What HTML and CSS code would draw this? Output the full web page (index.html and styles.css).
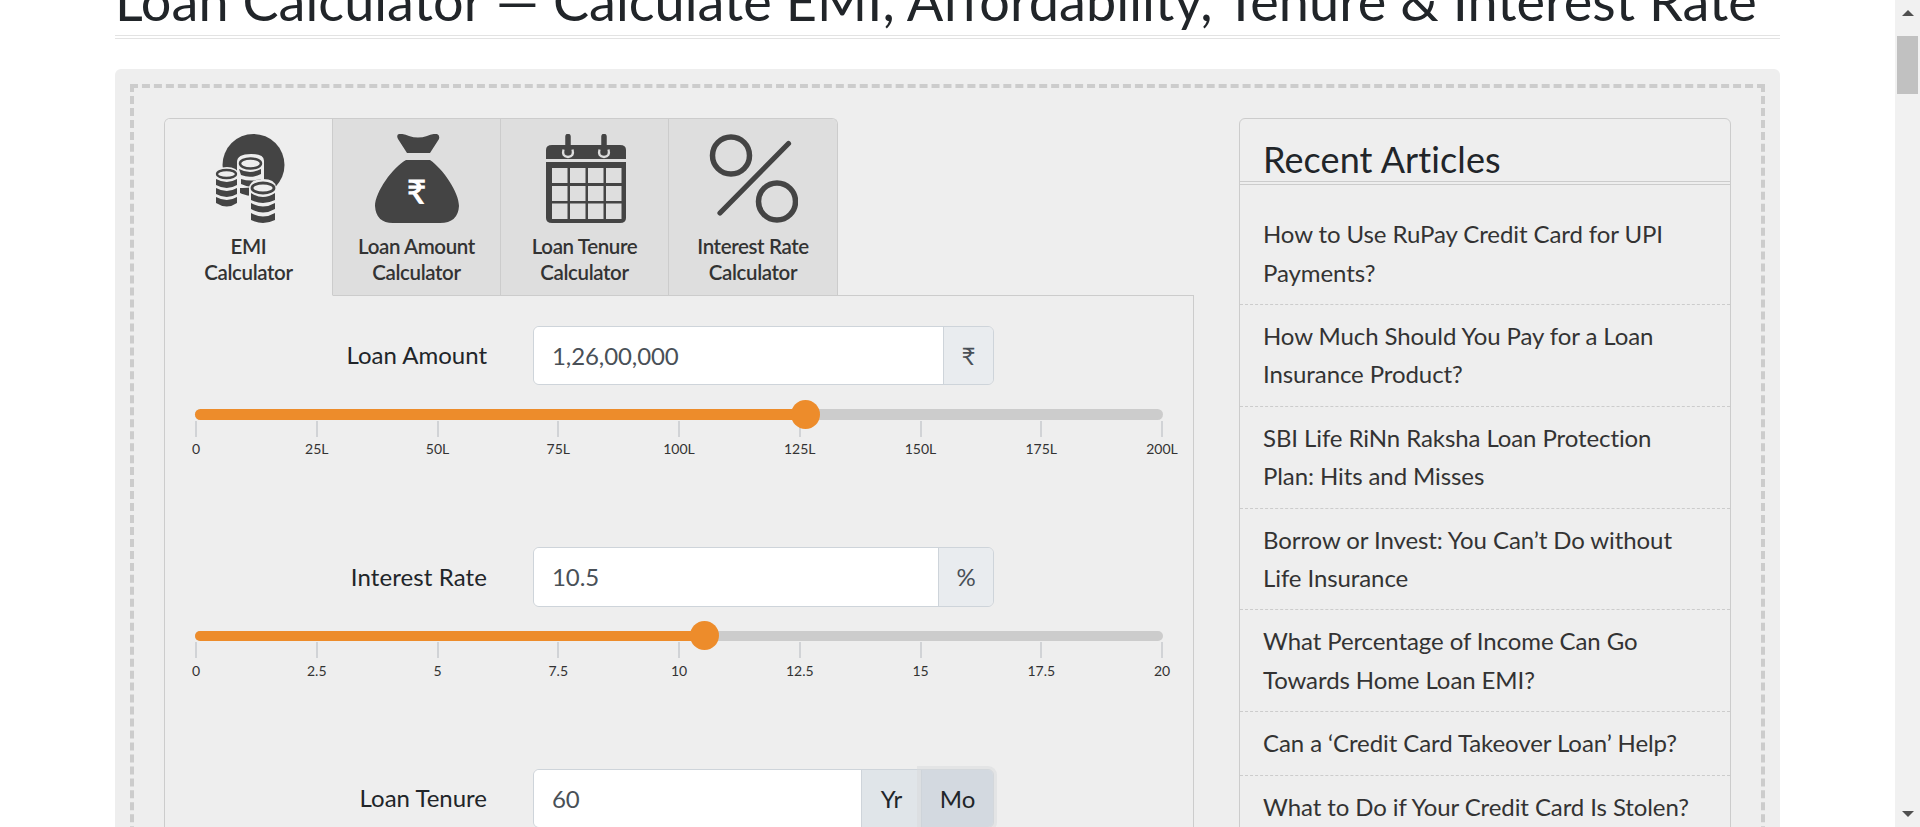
FILE: index.html
```html
<!DOCTYPE html>
<html lang="en">
<head>
<meta charset="utf-8">
<title>Loan Calculator</title>
<link rel="stylesheet" href="styles.css">
</head>
<body>
<div class="viewport">
  <main class="page">
    <h1 class="title"><span>Loan Calculator — Calculate EMI, Affordability, Tenure &amp; Interest Rate</span></h1>
    <div class="card">
      <div class="frame">
        <section class="calculator">
          <nav class="tabs">
            <a class="tab active">
              <svg class="tab-icon" viewBox="0 0 90 90">
                <circle cx="49.500" cy="31" r="31" fill="#444"/>
                <g transform="translate(9 0)">
                  <path d="M24 28Q24 20 38 20T51 28V50Q46 54 24 54z" fill="#eee"/>
                  <path d="M28 45Q38 48 48 45V52Q38 55 28 50z" fill="#444"/>
                  <path d="M26 35Q37 41 48 35V40Q38 45 28 41z" fill="#444"/>
                  <ellipse cx="37.500" cy="29.500" rx="10.500" ry="5" fill="#eee" stroke="#444" stroke-width="2.500"/>
                  <path d="M0 40Q4 33 14 33T27 41V72H3z" fill="#eee"/>
                  <path d="M3 45Q14 51 24 45V51Q14 57 3 51zM3 54Q14 60 24 54V60Q14 66 3 60zM3 63Q14 69 24 63V69Q14 76 3 69z" fill="#444"/>
                  <ellipse cx="13.500" cy="40" rx="9.500" ry="4" fill="#eee" stroke="#444" stroke-width="2.300"/>
                  <path d="M36 53Q38 45 50 45T63 53V90H36z" fill="#eee"/>
                  <path d="M38 59Q50 67 62 59V66Q50 72 38 66zM38 69Q50 76 62 69V75Q50 82 38 75zM38 79Q50 86 62 79V86Q50 92 38 86z" fill="#444"/>
                  <ellipse cx="50" cy="54" rx="11" ry="5" fill="#eee" stroke="#444" stroke-width="2.800"/>
                </g>
              </svg>
              <span>EMI<br>Calculator</span>
            </a>
            <a class="tab">
              <span class="bag">
                <svg class="tab-icon" viewBox="-1 0 90 90">
                  <path d="M26 0Q31-.5 36 2Q45 5 54 2Q59-.5 64 0Q67 1 66 5L57 19H34L25 5Q23 1 26 0zM33 26H57C70 35 86 58 86 72Q85 89 67 89H20Q3 89 2 72C2 58 20 33 33 26z" fill="#444"/>
                </svg>
                <b class="bag-sign">₹</b>
              </span>
              <span>Loan Amount<br>Calculator</span>
            </a>
            <a class="tab">
              <svg class="tab-icon" viewBox="-1 0 90 90">
                <path d="M5 25V16Q5 11 11 11H79Q85 11 85 16V25z" fill="#444"/>
                <path d="M5 28H85V84Q85 89 79 89H11Q5 89 5 84z" fill="#444"/>
                <path d="M11 34h15.500v15H11zM29 34h15.500v15H29zM47 34h15.500v15H47zM65 34h15.500v15H65zM11 52h15.500v15H11zM29 52h15.500v15H29zM47 52h15.500v15H47zM65 52h15.500v15H65zM11 69.500h15.500V85H11zM29 69.500h15.500V85H29zM47 69.500h15.500V85H47zM65 69.500h15.500V85H65z" fill="#dedede"/>
                <path d="M22.500 15.500q-2 7 4.500 7.500q6.500-.5 4.500-7.500M58.500 15.500q-2 7 4.500 7.500q6.500-.5 4.500-7.500" fill="none" stroke="#dedede" stroke-width="2.300"/>
                <path d="M27 2.500V17.500M63 2.500V17.500" stroke="#444" stroke-width="5.500" stroke-linecap="round"/>
              </svg>
              <span>Loan Tenure<br>Calculator</span>
            </a>
            <a class="tab">
              <svg class="tab-icon" viewBox="-1 0 90 90">
                <g fill="none" stroke="#444">
                  <circle cx="22" cy="21.500" r="18.500" stroke-width="5.500"/>
                  <circle cx="68" cy="67.500" r="18.500" stroke-width="5.500"/>
                  <path d="M11 79L79.500 9.500" stroke-width="5.200" stroke-linecap="round"/>
                </g>
              </svg>
              <span>Interest Rate<br>Calculator</span>
            </a>
          </nav>
          <div class="panel">
            <div class="row">
              <div class="field">
                <label class="label">Loan Amount</label>
                <div class="group"><span class="value">1,26,00,000</span><span class="addon rupee">₹</span></div>
              </div>
              <div class="slider"><div class="fill" style="width:63%"></div><i class="knob" style="left:63%"></i></div>
              <div class="scale"><span>0</span><span>25L</span><span>50L</span><span>75L</span><span>100L</span><span>125L</span><span>150L</span><span>175L</span><span>200L</span></div>
            </div>
            <div class="row rate">
              <div class="field">
                <label class="label">Interest Rate</label>
                <div class="group"><span class="value">10.5</span><span class="addon percent">%</span></div>
              </div>
              <div class="slider"><div class="fill" style="width:52.5%"></div><i class="knob" style="left:52.5%"></i></div>
              <div class="scale"><span>0</span><span>2.5</span><span>5</span><span>7.5</span><span>10</span><span>12.5</span><span>15</span><span>17.5</span><span>20</span></div>
            </div>
            <div class="row">
              <div class="field">
                <label class="label">Loan Tenure</label>
                <div class="group"><span class="value">60</span><span class="addon year">Yr</span><span class="addon month">Mo</span></div>
              </div>
            </div>
          </div>
        </section>
        <aside class="articles">
          <h3 class="articles-title">Recent Articles</h3>
          <ul class="list">
            <li>How to Use RuPay Credit Card for UPI<br>Payments?</li>
            <li>How Much Should You Pay for a Loan<br>Insurance Product?</li>
            <li>SBI Life RiNn Raksha Loan Protection<br>Plan: Hits and Misses</li>
            <li>Borrow or Invest: You Can’t Do without<br>Life Insurance</li>
            <li>What Percentage of Income Can Go<br>Towards Home Loan EMI?</li>
            <li>Can a ‘Credit Card Takeover Loan’ Help?</li>
            <li>What to Do if Your Credit Card Is Stolen?</li>
          </ul>
        </aside>
      </div>
    </div>
  </main>
  <div class="scrollbar">
    <svg class="arrow" viewBox="0 0 12 6"><path d="M0 6L6 0L12 6z" fill="#505050"/></svg>
    <div class="thumb"></div>
    <svg class="arrow" viewBox="0 0 12 6"><path d="M0 0L6 6L12 0z" fill="#505050"/></svg>
  </div>
</div>
</body>
</html>
```
FILE: styles.css
```css
* { box-sizing: border-box; }
html, body { margin: 0; height: 827px; overflow: hidden; }
body { background: #fff; color: #212529; font: 24px/1.5 Lato, sans-serif; font-variant-ligatures: none; }
.viewport { display: flex; height: 827px; overflow: hidden; }
.page { flex: 1; padding: 0 115px; height: 827px; overflow: hidden; }
.title { margin: 0; height: 39px; border-bottom: 4px double #e3e3e3; display: flex; align-items: flex-end; font-size: 54px; font-weight: 400; line-height: 64px; letter-spacing: .06px; white-space: nowrap; }
.title span { margin-bottom: 2px; }
.card { margin-top: 30px; height: 900px; padding: 15px; background: #eee; border-radius: 6px; }
.frame { height: 870px; border: 4px dashed #ccc; display: flex; padding: 30px 30px 0; justify-content: space-between; }
.calculator { width: 1030px; }
.tabs { display: flex; width: 674px; height: 178px; border: 1px solid #ccc; border-bottom: 0; border-radius: 6px 6px 0 0; overflow: hidden; position: relative; }
.tab { flex: 0 0 168px; display: flex; flex-direction: column; align-items: center; padding-top: 15px; gap: 9px; background: #dedede; border-right: 1px solid #ccc; border-bottom: 1px solid #ccc; color: #333; font-size: 20.5px; font-weight: 600; line-height: 26px; letter-spacing: -.38px; text-align: center; }
.tab.active { background: #eee; border-bottom-color: #eee; }
.tab:last-child { border-right: 0; }
.tab-icon { width: 90px; height: 90px; display: block; }
.bag { display: block; position: relative; height: 90px; }
.bag-sign { position: absolute; left: 0; right: 0; top: 38px; color: #fff; font: 700 34px/38px Lato, "Noto Sans", sans-serif; }
.panel { margin-top: -1px; height: 620px; padding: 30px 30px 0; border: 1px solid #ccc; }
.row { height: 221px; }
.row.rate { height: 222px; }
.field { display: flex; height: 59px; }
.rate .field { height: 60px; }
.label { width: 292px; margin-right: 46px; text-align: right; line-height: 58px; }
.rate .label { line-height: 60px; letter-spacing: .1px; }
.group { width: 461px; display: flex; border: 1px solid #ced4da; border-radius: 6px; }
.value { flex: 1; background: #fff; border-radius: 5px 0 0 5px; padding-left: 18px; line-height: 58px; color: #495057; letter-spacing: -.1px; }
.addon { background: #e9ecef; border-left: 1px solid #ced4da; border-radius: 0 5px 5px 0; text-align: center; line-height: 57px; color: #495057; }
.rupee { width: 50px; }
.percent { width: 55px; }
.year { width: 60px; background: #e0e5e9; border-radius: 0; color: #212529; }
.month { width: 72px; background: #d3d9e0; color: #212529; box-shadow: 0 0 0 4px rgba(216,217,219,.5); }
.slider { margin: 24px 0 0; height: 11px; border-radius: 6px; background: #ccc; position: relative; width: 968px; }
.rate .slider { height: 10px; }
.fill { height: 100%; background: #ed8c2b; border-radius: 6px 0 0 6px; }
.knob { position: absolute; top: -9px; width: 29px; height: 29px; margin-left: -13.5px; border-radius: 50%; background: #ed8c2b; z-index: 1; }
.rate .knob { top: -10px; }
.scale { display: flex; justify-content: space-between; margin: 1px 1px 0; }
.scale span { width: 0; display: flex; flex-direction: column; align-items: center; font-size: 14px; line-height: 24px; color: #333; white-space: nowrap; }
.rate .scale span { line-height: 26px; }
.scale span::before { content: ""; width: 2px; height: 16px; background: #d1d3d6; }
.articles { width: 492px; height: 760px; border: 1px solid #ccc; border-radius: 6px 6px 0 0; }
.articles-title { margin: 0; height: 66px; padding: 19px 23px 0; border-bottom: 4px double #ccc; font-size: 36px; font-weight: 400; line-height: 43px; letter-spacing: .1px; }
.list { list-style: none; margin: 18.2px 0 0; padding: 0; color: #333; line-height: 38.4px; letter-spacing: -.09px; }
.list li { padding: 12px 0 12px 23px; border-bottom: 1px dashed #ccc; white-space: nowrap; }
.scrollbar { width: 25px; background: #f1f1f1; display: flex; flex-direction: column; align-items: center; padding: 10px 0; }
.arrow { width: 12px; height: 6px; display: block; }
.thumb { width: 21px; height: 58px; margin: 20px 0 auto; background: #c1c1c1; }
```
